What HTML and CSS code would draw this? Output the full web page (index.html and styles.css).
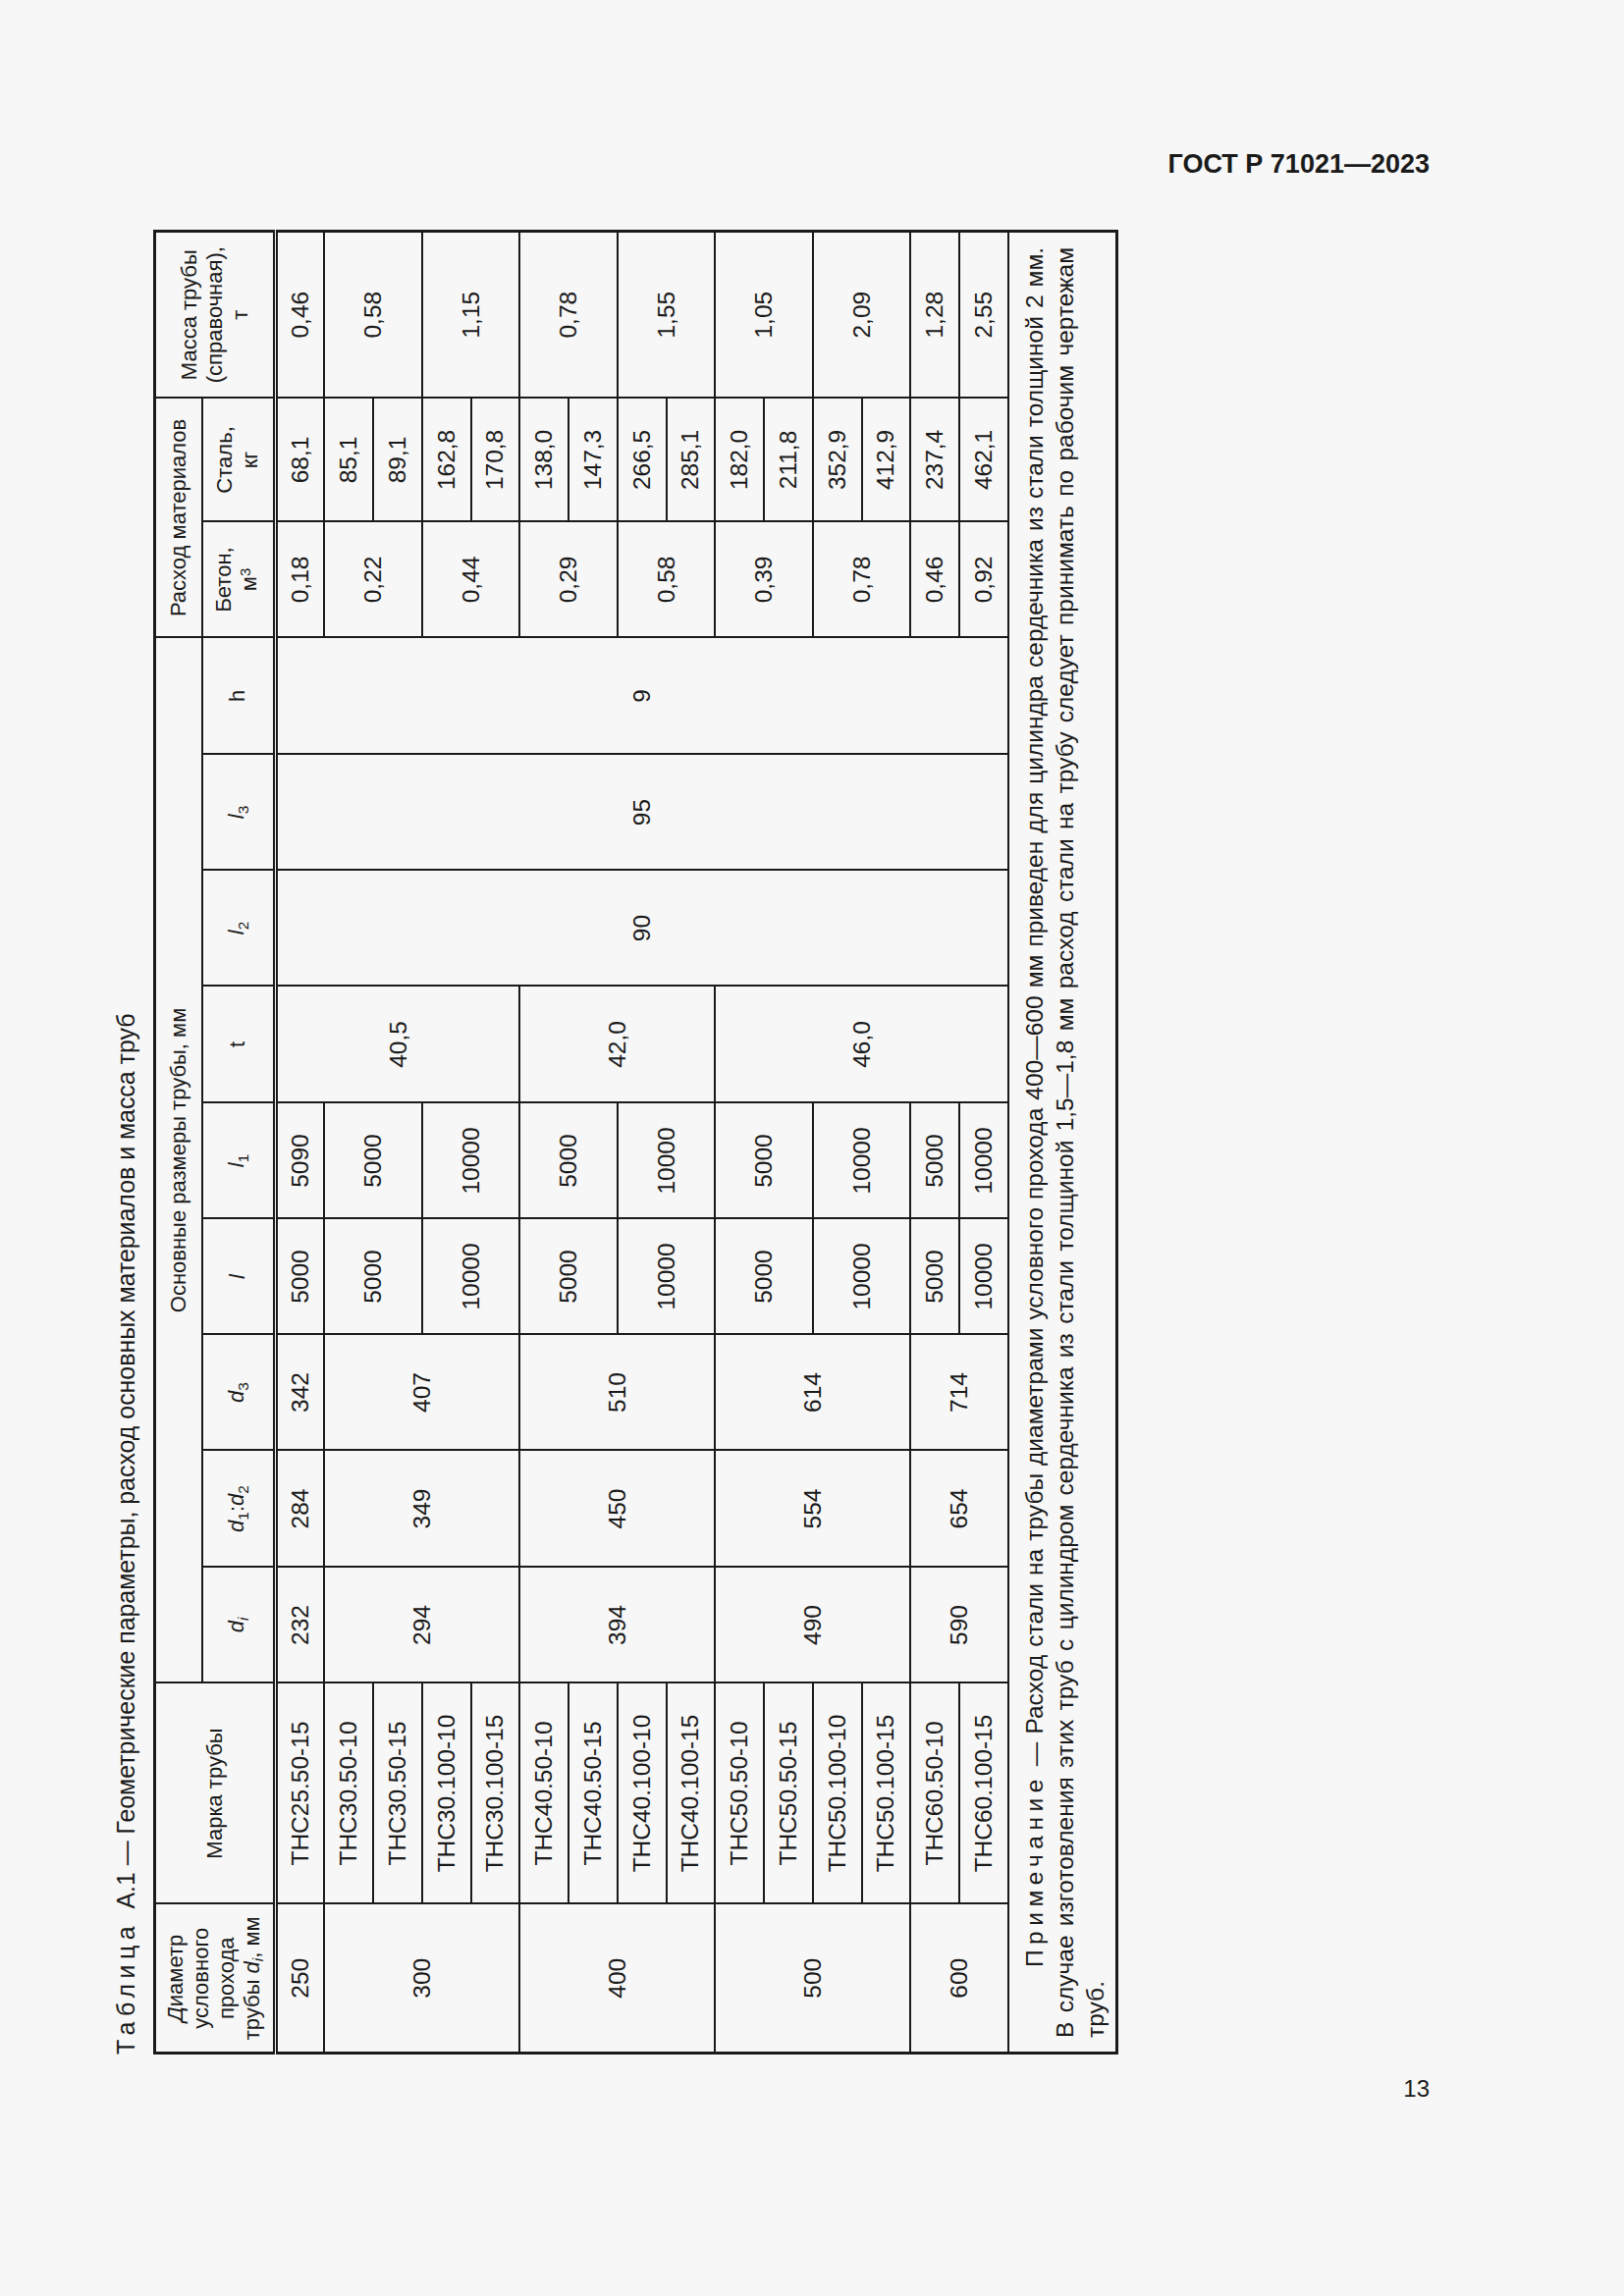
FILE: index.html
```html
<!DOCTYPE html>
<html lang="ru">
<head>
<meta charset="utf-8">
<title>ГОСТ Р 71021—2023</title>
<link rel="stylesheet" href="styles.css">
</head>
<body>
<div class="page">
  <div class="doc-head">ГОСТ Р 71021—2023</div>
  <div class="sheet">
    <div class="rot">
      <div class="caption"><span class="spaced">Таблица </span>А.1 — Геометрические параметры, расход основных материалов и масса труб</div>
      <table class="grid">
        <colgroup>
          <col style="width:152px"><col style="width:225px"><col style="width:118px"><col style="width:119px">
          <col style="width:118px"><col style="width:118px"><col style="width:118px"><col style="width:119px">
          <col style="width:118px"><col style="width:118px"><col style="width:119px"><col style="width:118px">
          <col style="width:126px"><col style="width:170px">
        </colgroup>
        <thead>
          <tr class="h1">
            <th rowspan="2" class="dbl"><i>Д</i>иаметр<br>условного<br>прохода<br>трубы <i>d<span class="sb">i</span></i>, мм</th>
            <th rowspan="2" class="dbl">Марка трубы</th>
            <th colspan="9">Основные размеры трубы, мм</th>
            <th colspan="2">Расход материалов</th>
            <th rowspan="2" class="dbl">Масса трубы<br>(справочная),<br>т</th>
          </tr>
          <tr class="h2">
            <th><i>d<span class="sb">i</span></i></th>
            <th><i>d</i><span class="sb">1</span>:<i>d</i><span class="sb">2</span></th>
            <th><i>d</i><span class="sb">3</span></th>
            <th><i>l</i></th>
            <th><i>l</i><span class="sb">1</span></th>
            <th>t</th>
            <th><i>l</i><span class="sb">2</span></th>
            <th><i>l</i><span class="sb">3</span></th>
            <th>h</th>
            <th>Бетон,<br>м<span class="sp">3</span></th>
            <th>Сталь,<br>кг</th>
          </tr>
        </thead>
        <tbody>
          <tr>
            <td>250</td><td>ТНС25.50-15</td><td>232</td><td>284</td><td>342</td><td>5000</td><td>5090</td>
            <td rowspan="5">40,5</td><td rowspan="15">90</td><td rowspan="15">95</td><td rowspan="15">9</td>
            <td>0,18</td><td>68,1</td><td>0,46</td>
          </tr>
          <tr>
            <td rowspan="4">300</td><td>ТНС30.50-10</td><td rowspan="4">294</td><td rowspan="4">349</td><td rowspan="4">407</td>
            <td rowspan="2">5000</td><td rowspan="2">5000</td><td rowspan="2">0,22</td><td>85,1</td><td rowspan="2">0,58</td>
          </tr>
          <tr><td>ТНС30.50-15</td><td>89,1</td></tr>
          <tr>
            <td>ТНС30.100-10</td><td rowspan="2">10000</td><td rowspan="2">10000</td><td rowspan="2">0,44</td><td>162,8</td><td rowspan="2">1,15</td>
          </tr>
          <tr><td>ТНС30.100-15</td><td>170,8</td></tr>
          <tr>
            <td rowspan="4">400</td><td>ТНС40.50-10</td><td rowspan="4">394</td><td rowspan="4">450</td><td rowspan="4">510</td>
            <td rowspan="2">5000</td><td rowspan="2">5000</td><td rowspan="4">42,0</td><td rowspan="2">0,29</td><td>138,0</td><td rowspan="2">0,78</td>
          </tr>
          <tr><td>ТНС40.50-15</td><td>147,3</td></tr>
          <tr>
            <td>ТНС40.100-10</td><td rowspan="2">10000</td><td rowspan="2">10000</td><td rowspan="2">0,58</td><td>266,5</td><td rowspan="2">1,55</td>
          </tr>
          <tr><td>ТНС40.100-15</td><td>285,1</td></tr>
          <tr>
            <td rowspan="4">500</td><td>ТНС50.50-10</td><td rowspan="4">490</td><td rowspan="4">554</td><td rowspan="4">614</td>
            <td rowspan="2">5000</td><td rowspan="2">5000</td><td rowspan="6">46,0</td><td rowspan="2">0,39</td><td>182,0</td><td rowspan="2">1,05</td>
          </tr>
          <tr><td>ТНС50.50-15</td><td>211,8</td></tr>
          <tr>
            <td>ТНС50.100-10</td><td rowspan="2">10000</td><td rowspan="2">10000</td><td rowspan="2">0,78</td><td>352,9</td><td rowspan="2">2,09</td>
          </tr>
          <tr><td>ТНС50.100-15</td><td>412,9</td></tr>
          <tr>
            <td rowspan="2">600</td><td>ТНС60.50-10</td><td rowspan="2">590</td><td rowspan="2">654</td><td rowspan="2">714</td>
            <td>5000</td><td>5000</td><td>0,46</td><td>237,4</td><td>1,28</td>
          </tr>
          <tr><td>ТНС60.100-15</td><td>10000</td><td>10000</td><td>0,92</td><td>462,1</td><td>2,55</td></tr>
          <tr class="note">
            <td colspan="14"><span class="spaced">Примечание</span> — Расход стали на трубы диаметрами условного прохода 400—600 мм приведен для цилиндра сердечника из стали толщиной 2 мм.<br>В случае изготовления этих труб с цилиндром сердечника из стали толщиной 1,5—1,8 мм расход стали на трубу следует принимать по рабочим чертежам<br>труб.</td>
          </tr>
        </tbody>
      </table>
    </div>
  </div>
  <div class="page-num">13</div>
</div>
</body>
</html>
```

FILE: styles.css
```css
html, body {
  margin: 0;
  padding: 0;
  background: #f7f7f7;
}

body {
  color: #1a1a1a;
  font-family: "Liberation Sans", Arial, sans-serif;
}

.page {
  width: 1654px;
  min-height: 2339px;
  box-sizing: border-box;
  padding: 151px 198px 0 100px;
}

.doc-head {
  text-align: right;
  font-weight: bold;
  font-size: 27px;
  line-height: 32px;
}

.sheet {
  margin-top: 54px;
  width: 1037px;
  height: 1856px;
}

.rot {
  width: 1856px;
  transform-origin: 0 0;
  transform: translateY(1856px) rotate(-90deg);
}

.caption {
  height: 56px;
  line-height: 56px;
  font-size: 24.9px;
  white-space: nowrap;
}

.spaced {
  letter-spacing: 5.5px;
}

.grid {
  width: 1856px;
  table-layout: fixed;
  border-collapse: collapse;
  border: 3px solid #1a1a1a;
  font-size: 24.5px;
}

.grid th,
.grid td {
  border: 2px solid #1a1a1a;
  padding: 0;
  text-align: center;
  vertical-align: middle;
  font-weight: normal;
  white-space: nowrap;
}

.grid th {
  font-size: 22px;
  line-height: 26px;
}

.grid .h1 {
  height: 48px;
}

.grid .h2 {
  height: 75px;
}

.grid .h2 th,
.grid th.dbl {
  border-bottom: 5px double #1a1a1a;
}

.grid tbody tr {
  height: 49.75px;
}

.sb {
  font-size: 0.7em;
  position: relative;
  top: 0.3em;
}

.grid .h2 th i + .sb {
  font-style: normal;
}

.sp {
  font-size: 0.68em;
  position: relative;
  top: -0.45em;
}

.grid tbody tr.note {
  height: 111px;
}

.grid .note td {
  text-align: justify;
  text-align-last: justify;
  vertical-align: top;
  padding: 10px 15px 0 14px;
  line-height: 31px;
  text-indent: 72px;
  font-size: 24.5px;
  white-space: normal;
}

.page-num {
  margin-top: 20px;
  text-align: right;
  font-size: 24px;
  line-height: 30px;
}
```
